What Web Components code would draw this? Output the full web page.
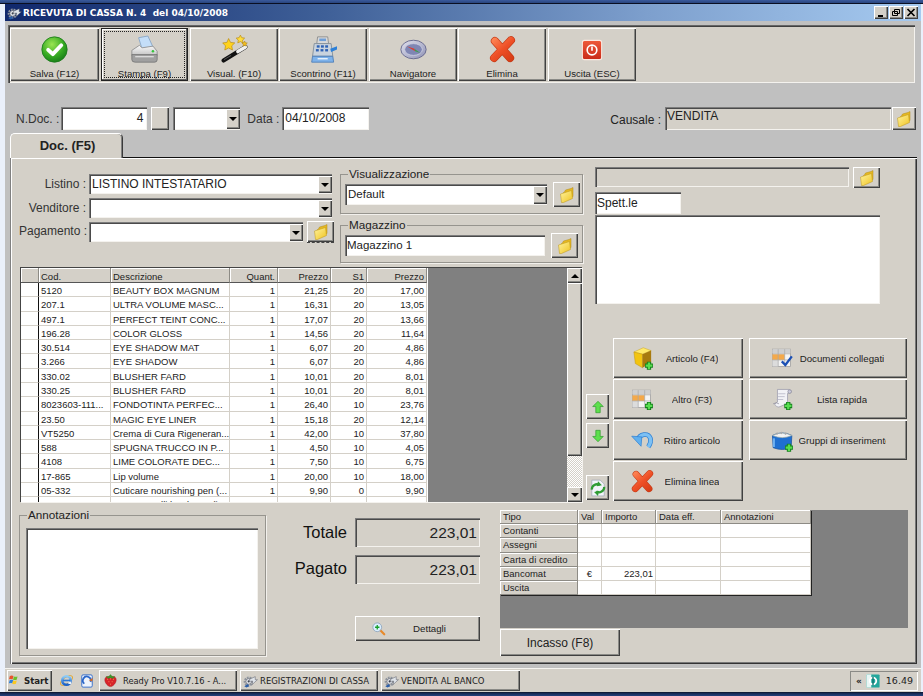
<!DOCTYPE html>
<html lang="it"><head><meta charset="utf-8"><title>Ricevuta di cassa</title>
<style>
html,body{margin:0;padding:0;background:#eaf0fb}
body{width:923px;height:696px;overflow:hidden;font-family:"Liberation Sans",Arial,sans-serif;color:#222}
</style></head><body>
<x-app></x-app>
<script>
const RAISED='box-shadow:inset 1px 1px #fff,inset -1px -1px #404040,inset -2px -2px #8a8a86;background:#d4d0c8;';
const SUNK='box-shadow:inset 1px 1px #7c7c7c,inset 2px 2px #4a4a4a,inset -1px -1px #f4f2ee;';
const plus=(x,y,s=1)=>`<g transform="translate(${x} ${y}) scale(${s})"><path d="M-5.5 0H5.5M0-5.5V5.5" stroke="#14801c" stroke-width="6"/><path d="M-4.5 0H4.5M0-4.5V4.5" stroke="#58de50" stroke-width="3.2"/></g>`;
const tbl=(extra='')=>`<rect x="2" y="3" width="25" height="24" fill="#f4f4f4" stroke="#9a9a9a"/><rect x="2" y="3" width="25" height="6" fill="#cfcfcf"/><rect x="2" y="10" width="17" height="8" fill="#f4a94a"/><rect x="2" y="18" width="8" height="9" fill="#dcdcdc"/><path d="M10 3V27M19 3V27M2 9.500H27M2 18H27" stroke="#a8a8a8"/>${extra}`;
const ICONS={
ok:`<defs><radialGradient id="g" cx=".4" cy=".3" r=".85"><stop offset="0" stop-color="#9ae552"/><stop offset=".55" stop-color="#34a822"/><stop offset="1" stop-color="#0c6a14"/></radialGradient></defs><circle cx="16" cy="16" r="15" fill="url(#g)" stroke="#1a7a1a"/><path d="M8.5 16.5l5.5 5 10-10.5" fill="none" stroke="#fff" stroke-width="4.6" stroke-linecap="round" stroke-linejoin="round"/>`,
printer:`<defs><linearGradient id="g" x2="0" y2="1"><stop offset="0" stop-color="#fafafa"/><stop offset="1" stop-color="#c4c4c4"/></linearGradient></defs><path d="M9 2l11-2 6 13-13 2z" fill="#c4def8" stroke="#84a4c6"/><path d="M1 17l9-6 3 3 13-2 5 6v5H1z" fill="url(#g)" stroke="#8c8c8c"/><path d="M1 22h30v6q0 3-3 3H5q-4 0-4-3z" fill="#a0a0a0" stroke="#777"/><path d="M5 24.500h22" stroke="#dadada" stroke-width="1.600"/><circle cx="26" cy="18" r="1.500" fill="#35c43c"/>`,
wand:`<path d="M3 29L29 13" stroke="#111" stroke-width="5" stroke-linecap="round"/><path d="M20 18.500L29 13" stroke="#f0f0f0" stroke-width="4.200" stroke-linecap="round"/><path d="M3.600 28L12 23" stroke="#666" stroke-width="1"/><path d="M9 3l2.300 4.600 5 .6-3.600 3.500.9 4.900-4.600-2.400-4.500 2.400.8-4.900L2 8.200l5-.6z" fill="#ffd21c" stroke="#b98a10" stroke-width=".8"/><path d="M23-1l1.600 3 3.400.5-2.500 2.400.6 3.300-3.100-1.600-3.100 1.600.6-3.300-2.500-2.400 3.400-.5z" fill="#ffdc3a" stroke="#b98a10" stroke-width=".8"/><path d="M28 6l1 2 2.200.3-1.600 1.500.4 2.200-2-1-2 1 .4-2.200-1.600-1.500 2.200-.3z" fill="#f4c020" stroke="#a87c10" stroke-width=".6"/>`,
cash:`<path d="M9 1h12l1 8H8z" fill="#d8d8d8" stroke="#888"/><path d="M11 3h8v3h-8z" fill="#6f9fd8"/><path d="M5 9h20l2 15H3z" fill="#c9d3de" stroke="#7d8996"/><g fill="#2f62b4"><rect x="8" y="11" width="3.400" height="2.800"/><rect x="13" y="11" width="3.400" height="2.800"/><rect x="18" y="11" width="3.400" height="2.800"/><rect x="7" y="15.500" width="3.400" height="2.800"/><rect x="12.500" y="15.500" width="3.400" height="2.800"/><rect x="18" y="15.500" width="3.400" height="2.800"/></g><path d="M3 24h24l1 7H2z" fill="#7eb2ea" stroke="#4a7ab4"/><path d="M9 27h12" stroke="#fff" stroke-width="1.400"/><path d="M24 15l8-3v4l-7 3z" fill="#2d80d8"/>`,
compass:`<defs><linearGradient id="g" x2="1" y2="1"><stop offset="0" stop-color="#e2e2ee"/><stop offset="1" stop-color="#8f92b6"/></linearGradient></defs><ellipse cx="16" cy="16" rx="15" ry="11" fill="url(#g)" stroke="#5e6088"/><ellipse cx="16" cy="16" rx="10.500" ry="7" fill="#7f86b4" stroke="#cfd2e2"/><path d="M8 12l9 3 1 3z" fill="#e03a2a"/><path d="M17 15l7 5-6-2z" fill="#3aa04a"/>`,
x:`<defs><linearGradient id="g" gradientUnits="userSpaceOnUse" x1="4" y1="2" x2="28" y2="30"><stop offset="0" stop-color="#ff8a5a"/><stop offset=".5" stop-color="#ee4f26"/><stop offset="1" stop-color="#d43a14"/></linearGradient></defs><path d="M7 6L25 26M26 5L6 26" stroke="#c43a16" stroke-width="9.600" stroke-linecap="round" fill="none"/><path d="M7 6L25 26M26 5L6 26" stroke="url(#g)" stroke-width="8" stroke-linecap="round" fill="none"/>`,
power:`<defs><linearGradient id="g" x2="0" y2="1"><stop offset="0" stop-color="#ee5a3a"/><stop offset="1" stop-color="#c92a18"/></linearGradient></defs><rect x="2" y="2" width="28" height="28" rx="3" fill="url(#g)" stroke="#fbe8e0" stroke-width="1.500"/><circle cx="16" cy="16" r="7" fill="none" stroke="#fff" stroke-width="2.400"/><path d="M16 11v6" stroke="#fff" stroke-width="2.400"/>`,
folder:`<defs><linearGradient id="g" x2="1" y2="1"><stop offset="0" stop-color="#fff3a0"/><stop offset="1" stop-color="#f0c420"/></linearGradient></defs><path d="M8 12l3-2 2-4 11-3 4-2v18L10 27z" fill="#e6b820" stroke="#b08a18"/><path d="M3 14l22-7 2 16-18 8H5z" fill="url(#g)" stroke="#bb9418"/>`,
cube:`<path d="M4 7l13-6 11 4-12 5z" fill="#ffe96a" stroke="#c49a10" stroke-width=".6"/><path d="M4 7l12 3v19L6 23z" fill="#f2c410" stroke="#b88c0a" stroke-width=".6"/><path d="M16 10l12-5v17l-12 7z" fill="#a87a0e"/>${plus(25,26)}`,
gridplus:tbl(plus(25,25)),
undo:`<path d="M9 16C12 6 24 5 27 13c1 4 0 8-3 12" fill="none" stroke="#2e80d4" stroke-width="6.500"/><path d="M9 16C12 6 24 5 27 13c1 4 0 8-3 12" fill="none" stroke="#7cc0f4" stroke-width="4.400"/><path d="M1 10l14 1-1 13z" fill="#62b0ee" stroke="#2e80d4"/>`,
gridcheck:tbl(`<path d="M15 20l5 5 9-12" fill="none" stroke="#1a4fb4" stroke-width="3.200"/>`),
scroll:`<path d="M9 2h16c3 0 4 4 1 5l-3 .5v14l-12 5c-3 0-7-3-5-5l3-2z" fill="#f2f2f6" stroke="#9898a8"/><path d="M10 8h10M9 12h10M8 16h9" stroke="#b0b0c0"/><circle cx="26" cy="5" r="2.500" fill="#ccd" stroke="#889"/><path d="M3 22q5-3 8 0" fill="none" stroke="#889"/>${plus(24,25)}`,
group:`<path d="M2 9q13-7 27 0l-1 17q-12 5-25 0z" fill="#1f6fd0" stroke="#16509c"/><path d="M2 9q13-7 27 0-13 6-27 0z" fill="#f2f2f2" stroke="#9aa"/><path d="M8 8l1-3M14 7l1-3M20 8l1-3" stroke="#aaa" stroke-width="2"/><path d="M4 13v12" stroke="#6eb0f0" stroke-width="3"/>${plus(25,26)}`,
up:`<path d="M16 3L28 15H21V29H11V15H4z" fill="#5ee04c" stroke="#2e9a2c" stroke-width="1.600"/>`,
down:`<path d="M16 29L28 17H21V3H11V17H4z" fill="#5ee04c" stroke="#2e9a2c" stroke-width="1.600"/>`,
refresh:`<path d="M5 2h15l7 7v21H5z" fill="#f2f4fa" stroke="#8d98ad"/><path d="M5 19a9 9 0 0 1 14-8" fill="none" stroke="#2f9c34" stroke-width="4"/><path d="M16 4l7 7-9 2z" fill="#2f9c34"/><path d="M27 14a9 9 0 0 1-14 8" fill="none" stroke="#2f9c34" stroke-width="4"/><path d="M16 30l-7-7 9-2z" fill="#2f9c34"/>`,
zoom:`<path d="M19 19l9 9" stroke="#e78a2c" stroke-width="5" stroke-linecap="round"/><circle cx="12" cy="12" r="10" fill="#dcefff" stroke="#8fa5bb" stroke-width="2"/><path d="M7 12h10M12 7v10" stroke="#18a02a" stroke-width="3"/>`,
flag:`<path d="M2 5q5-3 9 0l-2 8q-4-2-9 0z" fill="#e8532b"/><path d="M12 6q4 2 9 0l-2 8q-5 2-9 0z" fill="#6cbf2c"/><path d="M0 15q5-2 8.500 0l-2 8q-4-2-9 0z" fill="#2e80e0" transform="translate(2 0)"/><path d="M10 16q4 2 9 0l-2 8q-5 2-9 0z" fill="#fbc81e"/>`,
ie:`<defs><linearGradient id="g" x2="0" y2="1"><stop offset="0" stop-color="#8ecbf6"/><stop offset="1" stop-color="#1c62c8"/></linearGradient></defs><ellipse cx="16" cy="16" rx="15" ry="7" fill="none" stroke="#e4a62c" stroke-width="2" transform="rotate(-35 16 16)"/><circle cx="16" cy="16" r="9" fill="none" stroke="url(#g)" stroke-width="5.500"/><path d="M8 16h16" stroke="#2a78d8" stroke-width="3.500"/><path d="M20 21l6 0" stroke="#eaf3fd" stroke-width="5"/>`,
doc2:`<rect x="4" y="2" width="24" height="28" rx="3" fill="#eef3fb" stroke="#2a66c8" stroke-width="2"/><path d="M10 22a9 9 0 1 1 14-4" fill="none" stroke="#2a66c8" stroke-width="4"/><path d="M20 14l8 3 1-8z" fill="#d56a22"/>`,
berry:`<path d="M16 7c8-3 15 1 14 9-1 7-8 15-14 15S3 23 2 16C1 8 8 4 16 7z" fill="#d8242a" stroke="#9c1418"/><path d="M9 13h.1M16 12h.1M23 13h.1M12 19h.1M20 19h.1M16 25h.1" stroke="#ffb060" stroke-width="2" stroke-linecap="round"/><path d="M5 6l6 1 5-6 5 6 6-1-5 5-6-2-6 2z" fill="#3a9a2c" stroke="#246e1a" stroke-width=".6"/>`,
gear:`<circle cx="13" cy="17" r="9" fill="none" stroke="#8e949e" stroke-width="5" stroke-dasharray="4 2.200"/><circle cx="13" cy="17" r="6.500" fill="#e6e8ee" stroke="#555c68" stroke-width="1.500"/><circle cx="13" cy="17" r="2.500" fill="#3d4450"/><path d="M15 12l13-6v7l5 0-12 11 1-8-7 1z" fill="#dfe4ea" stroke="#444a58" stroke-width="1"/><path d="M3 28l8-5 3 5-6 3z" fill="#2a5ea8"/>`,
tray:`<rect x="1" y="1" width="30" height="30" rx="2" fill="#23a79c"/><rect x="1" y="1" width="11" height="30" fill="#e8f6f5"/><circle cx="16" cy="16" r="7.500" fill="none" stroke="#fff" stroke-width="4"/><path d="M16 6v20" stroke="#0b6e6a" stroke-width="3"/>`
};
class XIcon extends HTMLElement{connectedCallback(){const s=this.getAttribute('size')||16;this.attachShadow({mode:'open'}).innerHTML=`<style>:host{display:inline-block;width:${s}px;height:${s}px;flex:none;line-height:0}svg{width:100%;height:100%;overflow:visible}</style><svg viewBox="0 0 32 32" xmlns="http://www.w3.org/2000/svg">${ICONS[this.getAttribute('name')]||''}</svg>`;}}
customElements.define('x-icon',XIcon);
const mk=(name,css,html)=>customElements.define(name,class extends HTMLElement{constructor(){super();this.attachShadow({mode:'open'}).innerHTML=`<style>${css}</style>${typeof html==='function'?html(this):html}`;}});

customElements.define('x-tool',class extends HTMLElement{connectedCallback(){if(this.shadowRoot)return;const f=this.hasAttribute('focus');this.attachShadow({mode:'open'}).innerHTML=`<style>:host{display:flex;flex:none;box-sizing:border-box;width:var(--w,88px);height:53px;flex-direction:column;align-items:center;${RAISED}${f?'box-shadow:inset 0 0 0 1px #222,inset -2px -2px #606060,inset 2px 2px #fff;':''}font:9.600px "Liberation Sans",sans-serif;color:#222;position:relative}
.i{height:31px;margin-top:6px;display:flex;align-items:center;justify-content:center}.t{margin-top:3px;white-space:nowrap;line-height:12px}
${f?'.f{position:absolute;inset:3px;border:1px dotted #222;pointer-events:none}':''}</style><div class="i"><x-icon name="${this.getAttribute('icon')}" size="${this.getAttribute('size')||27}"></x-icon></div><div class="t"><slot></slot></div>${f?'<div class="f"></div>':''}`;}});

customElements.define('x-folder',class extends HTMLElement{connectedCallback(){if(this.shadowRoot)return;this.attachShadow({mode:'open'}).innerHTML=`<style>:host{display:flex;flex:none;align-items:center;justify-content:center;box-sizing:border-box;width:var(--w,27px);height:var(--h,25px);${RAISED}}</style><x-icon name="folder" size="16"></x-icon>`;}});

mk('x-field',`:host{display:flex;box-sizing:border-box;height:var(--h,22px);width:var(--w,100px);background:var(--bg,#fff);${SUNK}padding:var(--p,3px 2px 0 3px);font:var(--f,12px/16px "Liberation Sans",sans-serif);color:#222;justify-content:var(--j,flex-start);white-space:nowrap;overflow:hidden;flex:none}`,`<slot></slot>`);

mk('x-combo',`:host{display:flex;box-sizing:border-box;height:var(--h,20px);width:var(--w,100px);background:#fff;${SUNK}padding:0 0 0 3px;font:12px/19px "Liberation Sans",sans-serif;color:#222;white-space:nowrap;flex:none;position:relative;align-items:center}
.t{flex:1;overflow:hidden}.b{width:14px;height:calc(100% - 3px);margin:0 0 1px 0;align-self:flex-end;display:flex;align-items:center;justify-content:center;${RAISED}}
.b i{display:block;width:0;height:0;border:4px solid transparent;border-top:4px solid #000;border-bottom:0}`,`<div class="t"><slot></slot></div><div class="b"><i></i></div>`);

customElements.define('x-group',class extends HTMLElement{connectedCallback(){if(this.shadowRoot)return;this.attachShadow({mode:'open'}).innerHTML=`<style>:host{display:block;box-sizing:border-box;width:var(--w,243px);height:var(--h,47px);flex:none}
fieldset{box-sizing:border-box;margin:0;padding:var(--p,1px 4px 0 4px);width:100%;height:100%;border:1px solid #96948e;box-shadow:1px 1px 0 #f2f0ec;min-width:0}
legend{font:11.700px/14px "Liberation Sans",sans-serif;color:#222;padding:0 1px;margin-left:var(--lm,3px)}
.c{display:flex;gap:var(--g,6px);align-items:center}</style><fieldset><legend>${this.getAttribute('label')}</legend><div class="c"><slot></slot></div></fieldset>`;}});

customElements.define('x-cmd',class extends HTMLElement{connectedCallback(){if(this.shadowRoot)return;this.attachShadow({mode:'open'}).innerHTML=`<style>:host{display:flex;flex:none;box-sizing:border-box;height:var(--h,40px);width:var(--w,130px);align-items:center;${RAISED}font:var(--f,9.700px "Liberation Sans",sans-serif);color:#222}
.i{width:var(--ic,58px);display:flex;justify-content:center;flex:none}.t{flex:1;display:flex;justify-content:center;padding-right:var(--pr,30px);white-space:nowrap;min-width:0}.t span{display:block;flex:none;overflow:hidden;max-width:var(--mx,none)}</style><div class="i"><x-icon name="${this.getAttribute('icon')}" size="${this.getAttribute('size')||23}"></x-icon></div><div class="t"><span><slot></slot></span></div>`;}});

customElements.define('x-sq',class extends HTMLElement{connectedCallback(){if(this.shadowRoot)return;this.attachShadow({mode:'open'}).innerHTML=`<style>:host{display:flex;flex:none;box-sizing:border-box;width:23px;height:25px;align-items:center;justify-content:center;${RAISED}}</style><x-icon name="${this.getAttribute('icon')}" size="${this.getAttribute('size')||14}"></x-icon>`;}});

const ROWS=[["5120","BEAUTY BOX MAGNUM","1","21,25","20","17,00"],["207.1","ULTRA VOLUME MASC...","1","16,31","20","13,05"],["497.1","PERFECT TEINT CONC...","1","17,07","20","13,66"],["196.28","COLOR GLOSS","1","14,56","20","11,64"],["30.514","EYE SHADOW MAT","1","6,07","20","4,86"],["3.266","EYE SHADOW","1","6,07","20","4,86"],["330.02","BLUSHER FARD","1","10,01","20","8,01"],["330.25","BLUSHER FARD","1","10,01","20","8,01"],["8023603-111...","FONDOTINTA PERFEC...","1","26,40","10","23,76"],["23.50","MAGIC EYE LINER","1","15,18","20","12,14"],["VT5250","Crema di Cura Rigeneran...","1","42,00","10","37,80"],["588","SPUGNA TRUCCO IN P...","1","4,50","10","4,05"],["4108","LIME COLORATE DEC...","1","7,50","10","6,75"],["17-865","Lip volume","1","20,00","10","18,00"],["05-332","Cuticare nourishing pen (...","1","9,90","0","9,90"],["05-333","Fermacapelli bordeaux (i","1","10,00","10","10,00"]];
mk('x-articles',`:host{display:flex;flex:none;box-sizing:border-box;width:562px;height:235px;margin-left:1px;background:#808080;box-shadow:inset 1px 1px #444,1px 1px #f4f2ee;position:relative}
.g{width:407px;height:234px;margin:1px 0 0 1px;overflow:hidden;font:9.500px/13px "Liberation Sans",sans-serif;color:#222;flex:none;background:#fff}
.r{display:grid;grid-template-columns:18px 72px 119px 48px 53px 36px 60px;height:14.290px;box-sizing:border-box}
.c{box-sizing:border-box;padding:1px 3px 0 2px;white-space:nowrap;overflow:hidden;border-right:1px solid #d4d0c8;border-bottom:1px solid #d4d0c8}
.n{text-align:right;padding-right:2px}
.c:first-child{border-right:1px solid #111;background:#fff}
.r.h{height:15px}.h .c{background:#d4d0c8;border-right:1px solid #8d8b85;border-bottom:1px solid #555;box-shadow:inset 1px 1px #fff;padding-top:2px}
.sb{width:15px;margin-left:139px;height:234px;margin-top:1px;display:flex;flex-direction:column;flex:none;background:repeating-conic-gradient(#fff 0 25%,#d4d0c8 0 50%) 0 0/2px 2px}
.bt{height:15px;display:flex;align-items:center;justify-content:center;flex:none;${RAISED}}.th{height:173px;flex:none;${RAISED}}.sp{flex:1}
.u{width:0;height:0;border:4px solid transparent;border-bottom:4px solid #000;border-top:0}.d{width:0;height:0;border:4px solid transparent;border-top:4px solid #000;border-bottom:0}`,
()=>{const cell=(v,i)=>`<div class="c${i>=3?' n':''}">${v}</div>`;
const head=['','Cod.','Descrizione','Quant.','Prezzo','S1','Prezzo'];
return `<div class="g"><div class="r h">${head.map(cell).join('')}</div>${ROWS.map(r=>`<div class="r"><div class="c"></div>${r.map((v,i)=>cell(v,i+1)).join('')}</div>`).join('')}</div>
<div class="sb"><div class="bt"><i class="u"></i></div><div class="th"></div><div class="sp"></div><div class="bt"><i class="d"></i></div></div>`;});

const PAY=[["Contanti","","","",""],["Assegni","","","",""],["Carta di credito","","","",""],["Bancomat","€","223,01","",""],["Uscita","","","",""]];
mk('x-pay',`:host{display:block;box-sizing:border-box;width:408px;height:118px;background:#808080;flex:none}
.g{width:311px;font:9.500px/14.200px "Liberation Sans",sans-serif;color:#222;background:#fff;box-shadow:1px 1px #222}
.r{display:grid;grid-template-columns:78px 24px 54px 65px 90px;height:14.200px}
.c{box-sizing:border-box;padding:0 3px;white-space:nowrap;overflow:hidden;border-right:1px solid #d4d0c8;border-bottom:1px solid #d4d0c8}
.h{background:#d4d0c8;box-shadow:inset 1px 1px #fff;border-right:1px solid #8d8b85;border-bottom:1px solid #8d8b85}
.hd .c{padding-left:3px}.v{text-align:center}.n{text-align:right;padding-right:2px}`,
()=>`<div class="g"><div class="r hd">${['Tipo','Val','Importo','Data eff.','Annotazioni'].map(v=>`<div class="c h">${v}</div>`).join('')}</div>${PAY.map(r=>`<div class="r"><div class="c h">${r[0]}</div><div class="c v">${r[1]}</div><div class="c n">${r[2]}</div><div class="c">${r[3]}</div><div class="c">${r[4]}</div></div>`).join('')}</div>`);

mk('x-titlebar',`:host{display:flex;align-items:center;height:17px;flex:none;background:linear-gradient(90deg,#10286c 0,#3f6098 35%,#7d9fcd 70%,#a6caf0 100%);padding:0 3px 0 2px;font:bold 9px "DejaVu Sans",sans-serif;color:#fff;box-sizing:border-box}
.t{flex:1;margin-left:2px;white-space:nowrap}.w{display:flex;gap:1px;margin-right:0}.w div{box-sizing:border-box;width:14px;height:13px;${RAISED}display:flex;align-items:center;justify-content:center}svg{width:10px;height:9px}`,
`<x-icon name="gear" size="14"></x-icon><div class="t"><slot></slot></div><div class="w"><div><svg viewBox="0 0 10 9"><path d="M2 8h5" stroke="#000" stroke-width="2"/></svg></div><div><svg viewBox="0 0 10 9"><path d="M3.500 1.500h5v4h-5zM1.500 3.500h5v4h-5z" fill="#d4d0c8" stroke="#000"/></svg></div><div><svg viewBox="0 0 10 9"><path d="M1.500 1l7 7M8.500 1l-7 7" stroke="#000" stroke-width="1.700"/></svg></div></div>`);

mk('x-toolbar',`:host{display:flex;box-sizing:border-box;height:58px;flex:none;width:907px;background:#d4d0c8;box-shadow:inset 1px 1px #666,inset 2px 2px #404040,inset -1px -1px #f4f2ee;padding:3px 2px 2px}`,`<slot></slot>`);

mk('x-docrow',`:host{display:flex;height:23px;flex:none;margin-top:24px;padding-left:8px;align-items:center;font:12px "Liberation Sans",sans-serif;color:#333}
.l{white-space:nowrap}`,
`<span class="l" style="margin-right:2px">N.Doc. :</span>
<x-field style="--w:86px;--h:23px;--j:flex-end;--p:3px 4px 0 3px">4</x-field>
<x-sq icon="none" style="margin-left:4px;width:18px;height:23px"></x-sq>
<x-combo style="--w:67px;--h:23px;margin-left:4px"></x-combo>
<span class="l" style="margin-left:7px;margin-right:3px">Data :</span>
<x-field style="--w:87px;--h:23px">04/10/2008</x-field>
<span class="l" style="margin-left:241px;margin-right:4px;margin-top:2px;color:#222">Causale :</span>
<x-field style="--w:226px;--h:23px;--bg:#d4d0c8;--p:1px 2px 0 2px">VENDITA</x-field>
<x-folder style="--w:24px;--h:23px;margin-left:1px"></x-folder>`);

mk('x-tab',`:host{display:flex;box-sizing:border-box;width:113px;height:25px;align-items:center;justify-content:center;margin-left:2px;margin-top:3px;margin-bottom:-1px;background:#d4d0c8;border:1px solid #3a3a3a;border-bottom:0;border-left-color:#fff;border-top-color:#fff;border-radius:5px 5px 0 0;box-shadow:inset -1px 0 #808080;font:bold 13px "Liberation Sans",sans-serif;color:#222;position:relative;z-index:1;padding:0 0 2px 2px;flex:none}`,`<slot></slot>`);

mk('x-docpanel',`:host{display:flex;flex-direction:column;box-sizing:border-box;flex:none;margin-left:2px;width:907px;height:507px;background:#d4d0c8;border-top:1px solid #111;box-shadow:inset 1px 0 #808080,inset 2px 0 #fff,inset 0 1px #fff,inset -1px -1px #333,inset -2px -2px #777;padding:9px 9px 0 9px;font:12px "Liberation Sans",sans-serif;color:#222}
.up{display:flex;height:335px;flex:none}
.left{display:flex;flex-direction:column;width:564px;flex:none}
.forms{display:flex;height:100px;flex:none}
.fc{width:315px;padding-top:7px;flex:none;display:flex;flex-direction:column;gap:4px}
.fr{display:flex;align-items:center;height:20px}
.fr label{width:67px;text-align:right;margin-right:3px;white-space:nowrap;flex:none;color:#333}
.gc{margin-left:6px;display:flex;flex-direction:column;gap:4px;flex:none}
.right{display:flex;flex-direction:column;flex:none;width:322px;margin-left:3px}
.info{margin-left:9px;display:flex;flex-direction:column;height:171px;flex:none}
.inr{display:flex;height:21px;flex:none}
.cmds{display:flex;flex:none}
.arrows{width:23px;margin-right:4px;padding-top:56px;display:flex;flex-direction:column;flex:none}
.col{display:flex;flex-direction:column;gap:1px;flex:none;width:130px}
.col2{margin-left:6px;width:158px;--w:158px;--ic:66px;--pr:38px}
.low{display:flex;margin-top:6px;flex:none}
.tot{margin-left:34px;width:180px;padding-top:10px;flex:none}
.tr{display:flex;align-items:center;margin-bottom:8px;height:29px}
.tr label{width:60px;margin-left:-13px;text-align:right;margin-right:8px;font-size:16.500px;color:#111;flex:none;white-space:nowrap}
.pw{margin:2px 0 0 20px;width:408px;flex:none}`,
`<div class="up"><div class="left"><div class="forms"><div class="fc">
<div class="fr"><label>Listino :</label><x-combo style="--w:243px">LISTINO INTESTATARIO</x-combo></div>
<div class="fr"><label>Venditore :</label><x-combo style="--w:243px"></x-combo></div>
<div class="fr"><label style="margin-top:-2px">Pagamento :</label><x-combo style="--w:214px"></x-combo><x-folder style="--w:27px;--h:22px;margin-left:4px;border-bottom:1px dashed #444"></x-folder></div>
</div><div class="gc">
<x-group label="Visualizzazione" style="--h:47px"><x-combo style="--w:202px;--h:21px;font-size:11.500px">Default</x-combo><x-folder style="--h:25px"></x-folder></x-group>
<x-group label="Magazzino" style="--h:45px"><x-field style="--w:200px;--h:21px;--p:2px 2px 0 2px;--f:11.500px/16px 'Liberation Sans',sans-serif">Magazzino 1</x-field><x-folder style="--h:25px"></x-folder></x-group>
</div></div><x-articles></x-articles></div>
<div class="right"><div class="info"><div class="inr"><x-field style="--w:254px;--h:20px;--bg:#d4d0c8"></x-field><x-folder style="--w:27px;--h:21px;margin-left:4px"></x-folder></div>
<x-field style="--w:86px;--h:22px;margin-top:4px;--p:3px 2px 0 2px">Spett.le</x-field>
<x-field style="--w:285px;--h:89px;margin-top:1px"></x-field></div>
<div class="cmds"><div class="arrows"><x-sq icon="up"></x-sq><x-sq icon="down" style="margin-top:4px"></x-sq><x-sq icon="refresh" size="18" style="margin-top:27px"></x-sq></div>
<div class="col"><x-cmd icon="cube">Articolo (F4)</x-cmd><x-cmd icon="gridplus">Altro (F3)</x-cmd><x-cmd icon="undo">Ritiro articolo</x-cmd><x-cmd icon="x" size="23">Elimina linea</x-cmd></div>
<div class="col col2"><x-cmd icon="gridcheck">Documenti collegati</x-cmd><x-cmd icon="scroll">Lista rapida</x-cmd><x-cmd icon="group" style="--mx:87px">Gruppi di inserimento</x-cmd></div></div></div></div>
<div class="low"><x-group label="Annotazioni" style="--w:247px;--h:148px;--lm:1px;--p:6px 6px 0 6px"><x-field style="--w:232px;--h:121px"></x-field></x-group>
<div class="tot"><div class="tr"><label>Totale</label><x-field style="--w:125px;--h:29px;--bg:#d4d0c8;--j:flex-end;--p:6px 3px 0 0;--f:15.500px/18px 'Liberation Sans',sans-serif">223,01</x-field></div>
<div class="tr"><label style="margin-top:-2px">Pagato</label><x-field style="--w:125px;--h:29px;--bg:#d4d0c8;--j:flex-end;--p:6px 3px 0 0;--f:15.500px/18px 'Liberation Sans',sans-serif">223,01</x-field></div>
<x-cmd icon="zoom" size="14" style="--w:125px;--h:25px;--ic:48px;--pr:24px;margin:32px 0 0 55px">Dettagli</x-cmd></div>
<div class="pw"><x-pay></x-pay><x-cmd icon="none" size="0" style="--w:120px;--h:27px;--ic:0px;--pr:0px;--f:12px 'Liberation Sans',sans-serif;margin-top:1px">Incasso (F8)</x-cmd></div></div>`);

customElements.define('x-task',class extends HTMLElement{connectedCallback(){if(this.shadowRoot)return;this.attachShadow({mode:'open'}).innerHTML=`<style>:host{display:flex;flex:none;box-sizing:border-box;width:var(--w,138px);height:21px;align-items:center;padding-left:var(--pl,3px);gap:var(--g,3px);${RAISED}font:var(--f,8.500px "DejaVu Sans",sans-serif);color:#222;white-space:nowrap;overflow:hidden}</style><x-icon name="${this.getAttribute('icon')}" size="${this.getAttribute('size')||15}"></x-icon><slot></slot>`;}});

mk('x-taskbar',`:host{display:flex;box-sizing:border-box;flex:none;height:24px;align-items:center;background:#d4d0c8;box-shadow:inset 0 1px #f6f4f0;padding:1px 3px 0 2px;font:9px "DejaVu Sans",sans-serif;color:#222}
.ql{display:flex;gap:6px;margin:0 5px 0 7px;align-items:center}
.tb{display:flex;gap:3px}.tray{margin-left:auto;display:flex;align-items:center;box-sizing:border-box;width:68px;height:20px;box-shadow:inset 1px 1px #8a8a86,inset -1px -1px #fff;padding-left:6px;gap:4px}`,
`<x-task icon="flag" size="13" style="--w:45px;--f:bold 8.600px 'DejaVu Sans',sans-serif;--pl:2px;--g:2px">Start</x-task>
<div class="ql"><x-icon name="ie" size="15"></x-icon><x-icon name="doc2" size="14"></x-icon></div>
<div class="tb"><x-task icon="berry" size="13" style="--pl:5px;--g:6px;--f:8.300px 'DejaVu Sans',sans-serif">Ready Pro V10.7.16 - A...</x-task><x-task icon="gear" size="14">REGISTRAZIONI DI CASSA</x-task><x-task icon="gear" size="14" style="--w:139px">VENDITA AL BANCO</x-task></div>
<div class="tray"><b style="font-size:9px">«</b><x-icon name="tray" size="14"></x-icon><span style="margin-left:2px;font-size:9.500px">16.49</span></div>`);

mk('x-app',`:host{display:flex;flex-direction:column;width:923px;height:696px;background:#eaf0fb}
.top{height:4px;flex:none;background:linear-gradient(#3a5a9c 0,#2a4680 70%,#0a0f22 75%)}
.mid{flex:1;display:flex;flex-direction:column;margin:0 2px 0 5px;min-height:0}
.win{height:664px;flex:none;background:#c0c0c0;display:flex;flex-direction:column;overflow:hidden}
.body{padding:4px 0 0 3px;display:flex;flex-direction:column;flex:1}
.bot{height:4px;flex:none;background:linear-gradient(#0a0f22 0,#14264e 25%,#23407c 100%)}`,
`<div class="top"></div><div class="mid"><div class="win"><x-titlebar>RICEVUTA DI CASSA N. 4&nbsp; del 04/10/2008</x-titlebar><div class="body"><x-toolbar>
<x-tool icon="ok" style="--w:89px">Salva (F12)</x-tool><x-tool icon="printer" focus style="--w:87px;margin-left:2px">Stampa (F9)</x-tool><x-tool icon="wand" style="margin-left:2px">Visual. (F10)</x-tool><x-tool icon="cash" style="margin-left:1px">Scontrino (F11)</x-tool><x-tool icon="compass" style="margin-left:2px">Navigatore</x-tool><x-tool icon="x" style="margin-left:1px">Elimina</x-tool><x-tool icon="power" size="22" style="margin-left:2px">Uscita (ESC)</x-tool>
</x-toolbar><x-docrow></x-docrow><x-tab>Doc. (F5)</x-tab><x-docpanel></x-docpanel></div></div><x-taskbar></x-taskbar></div><div class="bot"></div>`);
</script>
</body></html>
